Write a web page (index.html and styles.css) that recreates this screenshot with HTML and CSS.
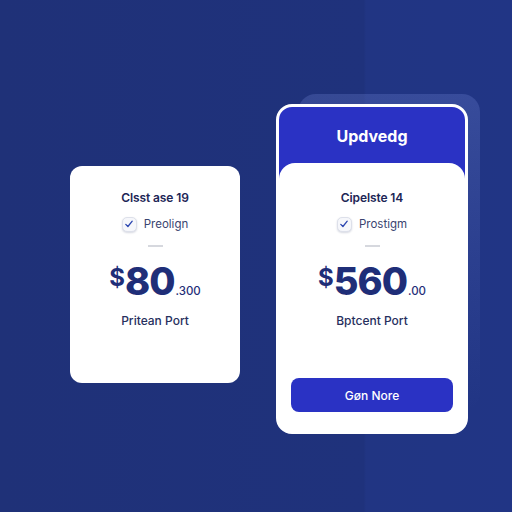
FILE: index.html
```html
<!DOCTYPE html>
<html lang="en">
<head>
<meta charset="utf-8">
<title>Plans</title>
<link rel="stylesheet" href="styles.css">
</head>
<body>
<main class="stage">
  <section class="plan plan-basic">
    <h3 class="plan-name">Clsst ase 19</h3>
    <div class="feature">
      <span class="check"><svg viewBox="0 0 14 14" width="10" height="10"><path d="M2.5 7.5 L5.5 10.5 L11.5 3" fill="none" stroke="#2a45b0" stroke-width="1.8" stroke-linecap="round" stroke-linejoin="round"/></svg></span>
      <span>Preolign</span>
    </div>
    <div class="rule"></div>
    <div class="price"><span class="cur">$</span><span class="amt">80</span><span class="cents">.300</span></div>
    <p class="period">Pritean Port</p>
  </section>

  <section class="plan plan-featured">
    <header class="plan-head">Updvedg</header>
    <div class="plan-body">
      <h3 class="plan-name">Cipelste 14</h3>
      <div class="feature">
        <span class="check"><svg viewBox="0 0 14 14" width="10" height="10"><path d="M2.5 7.5 L5.5 10.5 L11.5 3" fill="none" stroke="#2a45b0" stroke-width="1.8" stroke-linecap="round" stroke-linejoin="round"/></svg></span>
        <span>Prostigm</span>
      </div>
      <div class="rule"></div>
      <div class="price"><span class="cur">$</span><span class="amt">560</span><span class="cents">.00</span></div>
      <p class="period">Bptcent Port</p>
      <button class="cta">Gøn Nore</button>
    </div>
  </section>
</main>
</body>
</html>
```

FILE: styles.css
```css
* { box-sizing: border-box; }

html, body {
  margin: 0;
  height: 100%;
}

body {
  background: linear-gradient(90deg, #1f3178 0%, #1f327c 71%, #213583 71.5%, #213585 100%);
  font-family: "Inter", "Open Sans", sans-serif;
  color: #1d2656;
}

.stage {
  display: flex;
  align-items: flex-start;
  gap: 36px;
  padding: 104px 0 0 70px;
}

.plan {
  background: #fff;
  display: flex;
  flex-direction: column;
  align-items: center;
}

.plan-basic {
  width: 170px;
  height: 217px;
  margin-top: 62px;
  border-radius: 12px;
  padding-top: 24px;
}

.plan-name {
  margin: 0;
  font-size: 12px;
  font-weight: 600;
  line-height: 16px;
  color: #1d2656;
  letter-spacing: -0.1px;
}

.feature {
  display: flex;
  align-items: center;
  gap: 7px;
  margin-top: 10px;
  font-size: 11.5px;
  line-height: 16px;
  color: #3a4470;
}

.check {
  width: 15px;
  height: 15px;
  border-radius: 5px;
  border: 1px solid #dde0ea;
  background: #f6f7fb;
  box-shadow: 0 1px 2px rgba(30, 40, 90, 0.18);
  display: flex;
  align-items: center;
  justify-content: center;
}

.rule {
  width: 15px;
  height: 2px;
  background: #d6d8de;
  margin-top: 13px;
}

.price {
  display: flex;
  align-items: baseline;
  margin-top: 15px;
  color: #1f2e78;
  line-height: 1;
}

.cur {
  font-size: 24px;
  font-weight: 700;
  align-self: flex-start;
  margin-top: 4px;
  margin-right: 0;
}

.amt {
  font-size: 38px;
  font-weight: 800;
  letter-spacing: -1px;
}

.cents {
  font-size: 11.5px;
  font-weight: 500;
  margin-left: 1px;
}

.period {
  margin: 13px 0 0;
  font-size: 12px;
  font-weight: 500;
  line-height: 16px;
  color: #27305e;
}

.plan-featured {
  position: relative;
  width: 192px;
  height: 330px;
  border-radius: 16px;
  border: 3px solid #fff;
  background: linear-gradient(180deg, #2a32c4 0 80px, #fff 80px);
  align-items: stretch;
}

/* soft plate that sits behind the featured card */
.plan-featured::before {
  content: "";
  position: absolute;
  left: 19px;
  right: -15px;
  top: -13px;
  bottom: 20px;
  border-radius: 18px;
  background: linear-gradient(180deg, rgba(120, 140, 220, 0.26) 0%, rgba(120, 140, 220, 0.12) 50%, rgba(120, 140, 220, 0) 100%);
  z-index: -1;
}

.plan-head {
  height: 56px;
  display: flex;
  align-items: center;
  justify-content: center;
  color: #fff;
  font-size: 16px;
  font-weight: 700;
  padding-top: 1px;
}

.plan-body {
  flex: 1;
  background: #fff;
  border-radius: 16px 16px 13px 13px;
  display: flex;
  flex-direction: column;
  align-items: center;
  padding-top: 27px;
}

.cta {
  margin-top: 49px;
  width: 162px;
  height: 34px;
  border: none;
  border-radius: 8px;
  background: #2a32c4;
  color: #fff;
  font-family: inherit;
  font-size: 12px;
  font-weight: 500;
}
```
